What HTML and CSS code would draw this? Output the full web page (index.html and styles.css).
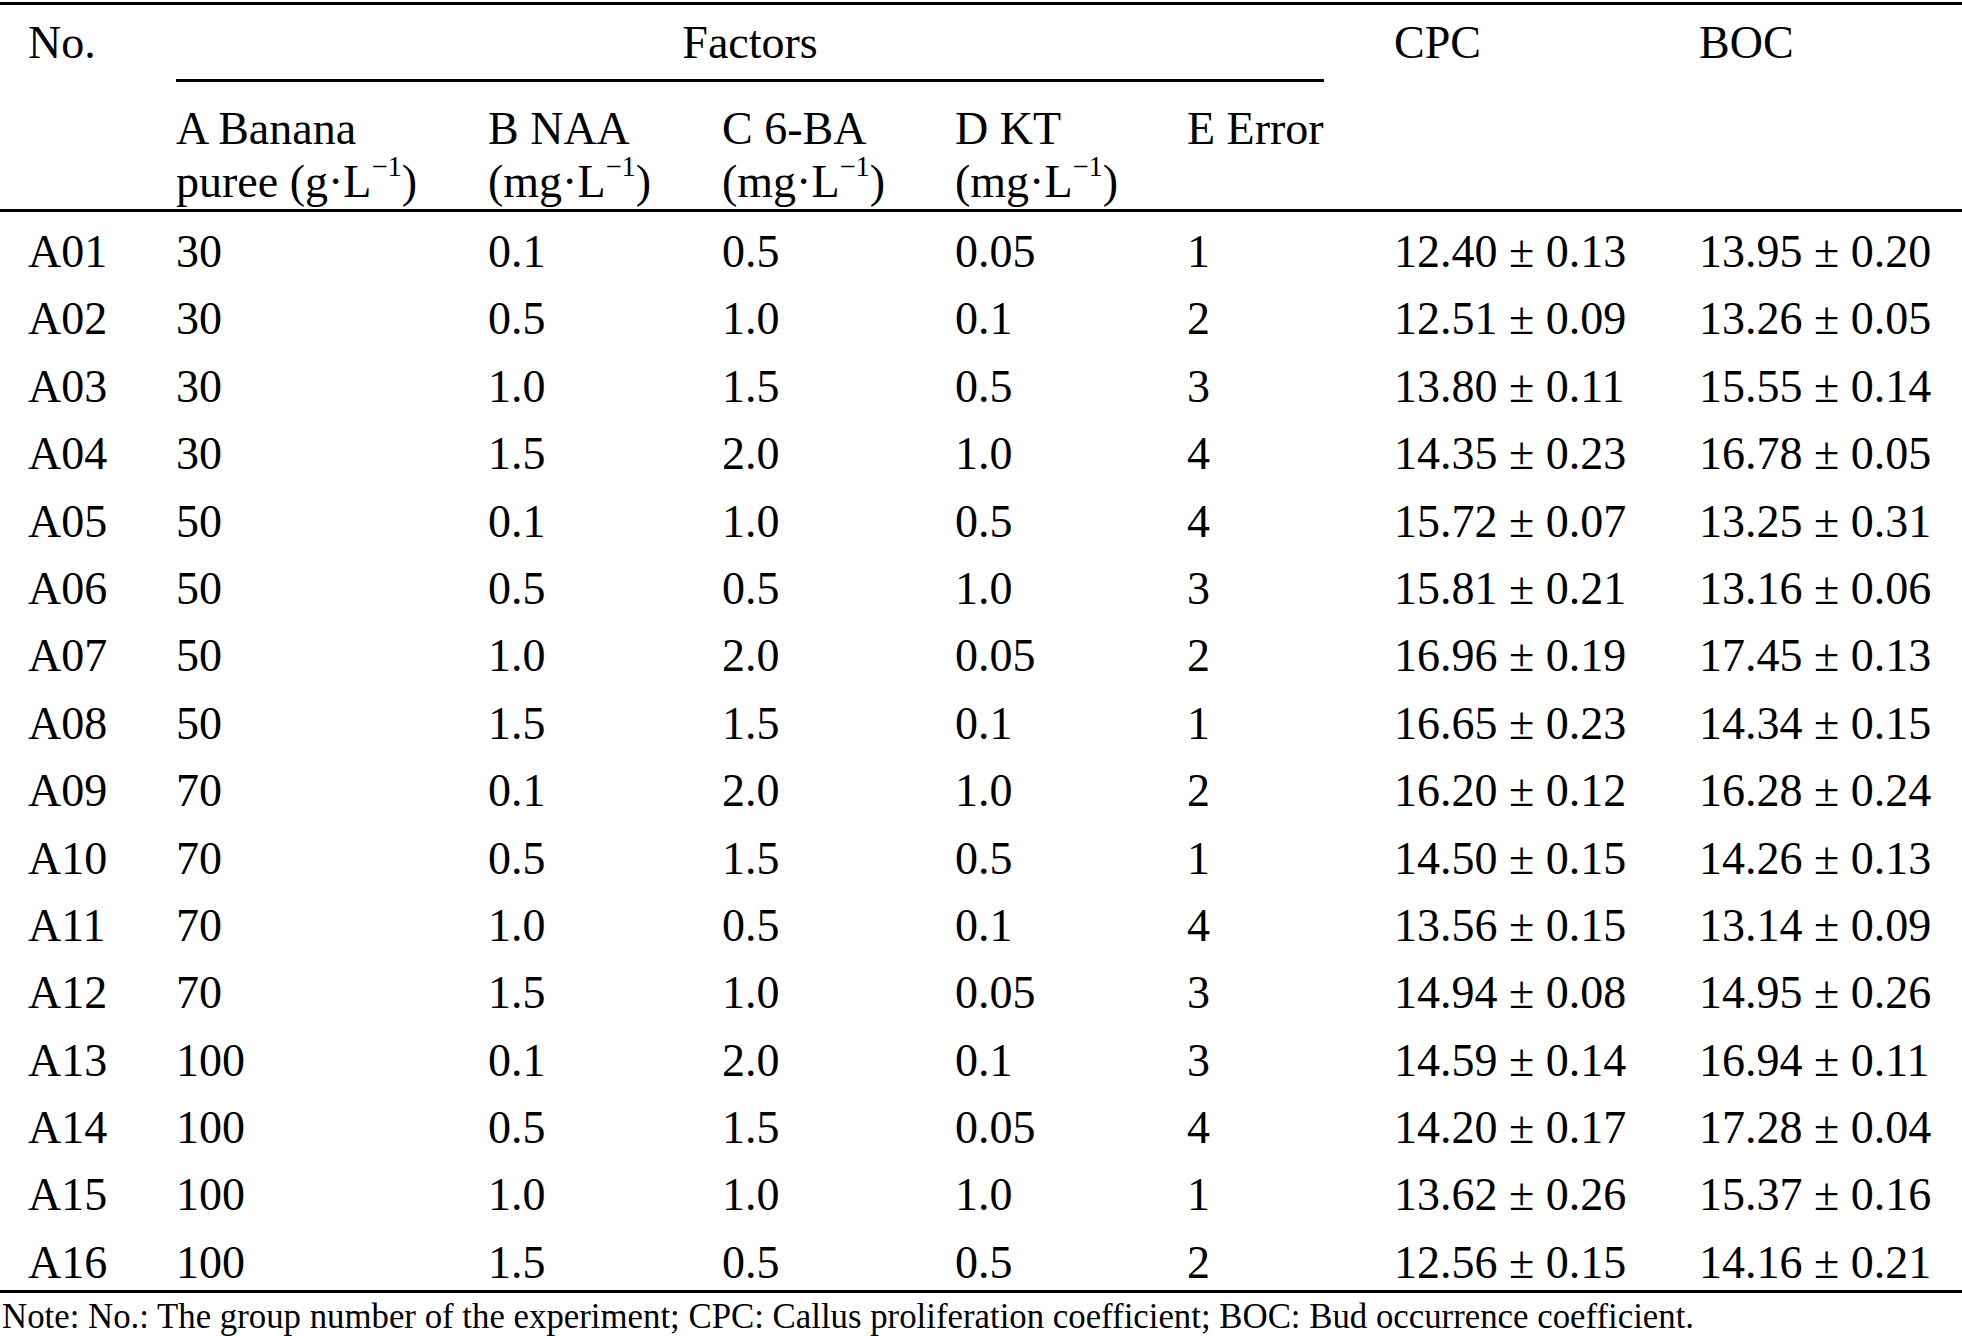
FILE: index.html
```html
<!DOCTYPE html>
<html lang="en">
<head>
<meta charset="utf-8">
<title>Orthogonal design table</title>
<link rel="stylesheet" href="styles.css">
</head>
<body>
<div class="page">
<table class="data">
  <colgroup>
    <col class="c-no"><col class="c-a"><col class="c-b"><col class="c-c"><col class="c-d"><col class="c-e"><col class="c-cpc"><col class="c-boc">
  </colgroup>
  <thead>
    <tr class="h1">
      <th rowspan="2" class="no">No.</th>
      <th colspan="5" class="factors">Factors</th>
      <th rowspan="2" class="cpc">CPC</th>
      <th rowspan="2" class="boc">BOC</th>
    </tr>
    <tr class="h2">
      <th>A Banana<br>puree (g·L<sup>−1</sup>)</th>
      <th>B NAA<br>(mg·L<sup>−1</sup>)</th>
      <th>C 6-BA<br>(mg·L<sup>−1</sup>)</th>
      <th>D KT<br>(mg·L<sup>−1</sup>)</th>
      <th>E Error</th>
    </tr>
  </thead>
  <tbody>
    <tr><td class="no">A01</td><td>30</td><td>0.1</td><td>0.5</td><td>0.05</td><td>1</td><td class="cpc">12.40 ± 0.13</td><td>13.95 ± 0.20</td></tr>
    <tr><td class="no">A02</td><td>30</td><td>0.5</td><td>1.0</td><td>0.1</td><td>2</td><td class="cpc">12.51 ± 0.09</td><td>13.26 ± 0.05</td></tr>
    <tr><td class="no">A03</td><td>30</td><td>1.0</td><td>1.5</td><td>0.5</td><td>3</td><td class="cpc">13.80 ± 0.11</td><td>15.55 ± 0.14</td></tr>
    <tr><td class="no">A04</td><td>30</td><td>1.5</td><td>2.0</td><td>1.0</td><td>4</td><td class="cpc">14.35 ± 0.23</td><td>16.78 ± 0.05</td></tr>
    <tr><td class="no">A05</td><td>50</td><td>0.1</td><td>1.0</td><td>0.5</td><td>4</td><td class="cpc">15.72 ± 0.07</td><td>13.25 ± 0.31</td></tr>
    <tr><td class="no">A06</td><td>50</td><td>0.5</td><td>0.5</td><td>1.0</td><td>3</td><td class="cpc">15.81 ± 0.21</td><td>13.16 ± 0.06</td></tr>
    <tr><td class="no">A07</td><td>50</td><td>1.0</td><td>2.0</td><td>0.05</td><td>2</td><td class="cpc">16.96 ± 0.19</td><td>17.45 ± 0.13</td></tr>
    <tr><td class="no">A08</td><td>50</td><td>1.5</td><td>1.5</td><td>0.1</td><td>1</td><td class="cpc">16.65 ± 0.23</td><td>14.34 ± 0.15</td></tr>
    <tr><td class="no">A09</td><td>70</td><td>0.1</td><td>2.0</td><td>1.0</td><td>2</td><td class="cpc">16.20 ± 0.12</td><td>16.28 ± 0.24</td></tr>
    <tr><td class="no">A10</td><td>70</td><td>0.5</td><td>1.5</td><td>0.5</td><td>1</td><td class="cpc">14.50 ± 0.15</td><td>14.26 ± 0.13</td></tr>
    <tr><td class="no">A11</td><td>70</td><td>1.0</td><td>0.5</td><td>0.1</td><td>4</td><td class="cpc">13.56 ± 0.15</td><td>13.14 ± 0.09</td></tr>
    <tr><td class="no">A12</td><td>70</td><td>1.5</td><td>1.0</td><td>0.05</td><td>3</td><td class="cpc">14.94 ± 0.08</td><td>14.95 ± 0.26</td></tr>
    <tr><td class="no">A13</td><td>100</td><td>0.1</td><td>2.0</td><td>0.1</td><td>3</td><td class="cpc">14.59 ± 0.14</td><td>16.94 ± 0.11</td></tr>
    <tr><td class="no">A14</td><td>100</td><td>0.5</td><td>1.5</td><td>0.05</td><td>4</td><td class="cpc">14.20 ± 0.17</td><td>17.28 ± 0.04</td></tr>
    <tr><td class="no">A15</td><td>100</td><td>1.0</td><td>1.0</td><td>1.0</td><td>1</td><td class="cpc">13.62 ± 0.26</td><td>15.37 ± 0.16</td></tr>
    <tr><td class="no">A16</td><td>100</td><td>1.5</td><td>0.5</td><td>0.5</td><td>2</td><td class="cpc">12.56 ± 0.15</td><td>14.16 ± 0.21</td></tr>
  </tbody>
</table>
<p class="note">Note: No.: The group number of the experiment; CPC: Callus proliferation coefficient; BOC: Bud occurrence coefficient.</p>
</div>
</body>
</html>
```

FILE: styles.css
```css
html, body {
  margin: 0;
  padding: 0;
  background: #ffffff;
}

.page {
  width: 1962px;
  padding-top: 2px;
  font-family: "Liberation Serif", "Times New Roman", serif;
  color: #000000;
}

.data {
  width: 1962px;
  table-layout: fixed;
  border-collapse: separate;
  border-spacing: 0;
  border-top: 3px solid #000;
  border-bottom: 3px solid #000;
  font-size: 46px;
}

.c-no { width: 176px; }
.c-a { width: 312px; }
.c-b { width: 234px; }
.c-c { width: 233px; }
.c-d { width: 232px; }
.c-e { width: 137px; }
.c-cpc { width: 375px; }
.c-boc { width: 263px; }

.data th,
.data td {
  padding: 0;
  text-align: left;
  font-weight: normal;
  white-space: nowrap;
  vertical-align: top;
}

.data .no { padding-left: 28px; }
.data .cpc { padding-left: 70px; }

.h1 th {
  line-height: 50px;
  padding-top: 13px;
  padding-bottom: 11px;
}

.h1 th.no { padding-left: 28px; }
.h1 th.cpc { padding-left: 70px; }

.h1 th.factors {
  text-align: center;
  border-bottom: 3px solid #000;
}

.h2 th {
  line-height: 53px;
  padding-top: 20px;
  padding-bottom: 1px;
  border-bottom: 3px solid #000;
}

.h1 th.no,
.h1 th.cpc,
.h1 th.boc {
  border-bottom: 3px solid #000;
}

.data sup {
  font-size: 0.62em;
  line-height: 0;
  vertical-align: 0.72em;
}

.data tbody td {
  line-height: 50px;
  padding-top: 15px;
  padding-bottom: 2.4px;
}

.note {
  margin: 0;
  padding-left: 2px;
  font-size: 34.8px;
  line-height: 48px;
}
```
